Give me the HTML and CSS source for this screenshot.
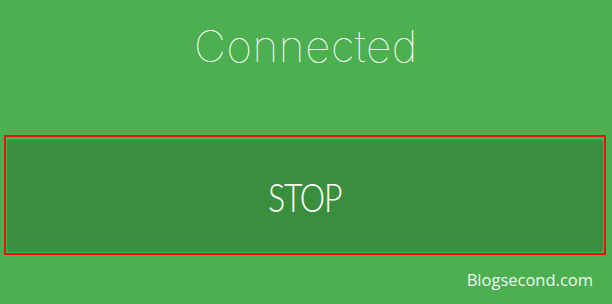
FILE: index.html
```html
<!DOCTYPE html>
<html>
<head>
<meta charset="utf-8">
<link rel="stylesheet" href="styles.css">
</head>
<body>
<div class="screen">
  <h1 class="status">Connected</h1>
  <div class="frame">
    <button class="stop"><span class="stop-label">STOP</span></button>
  </div>
  <div class="credit">Blogsecond.com</div>
</div>
</body>
</html>
```
FILE: styles.css
```css
html, body {
  margin: 0;
  padding: 0;
}
body {
  background: #4caf50;
}
.screen {
  width: 612px;
  height: 304px;
  display: flex;
  flex-direction: column;
  background: #4caf50;
  overflow: hidden;
}
.status {
  margin: 0;
  padding-top: 16px;
  height: 135px;
  flex: none;
  box-sizing: border-box;
  text-align: center;
  font-family: "Inter", "Roboto", sans-serif;
  font-weight: 100;
  font-size: 44px;
  line-height: 60px;
  color: #ffffff;
  letter-spacing: 0.6px;
}
.frame {
  margin: 0 6px 0 4px;
  border: 2px solid #f20d0d;
  padding: 2px 1px 1px 1px;
  height: 120px;
  flex: none;
  box-sizing: border-box;
  display: flex;
}
.stop {
  flex: 1;
  border: none;
  border-radius: 4px;
  background: #3a8f3e;
  box-shadow: inset 0 1px 0 #45a049;
  color: #ffffff;
  font-family: "Lato", "Open Sans", sans-serif;
  font-weight: 300;
  font-size: 39px;
  padding: 0;
  padding-top: 2px;
}
.stop-label {
  display: inline-block;
  letter-spacing: -1.5px;
  transform: scaleX(0.82);
}
.credit {
  margin-top: 14px;
  padding-right: 19px;
  text-align: right;
  font-family: "Open Sans", sans-serif;
  font-size: 16.5px;
  line-height: 22px;
  color: #f2f6f2;
}
```
